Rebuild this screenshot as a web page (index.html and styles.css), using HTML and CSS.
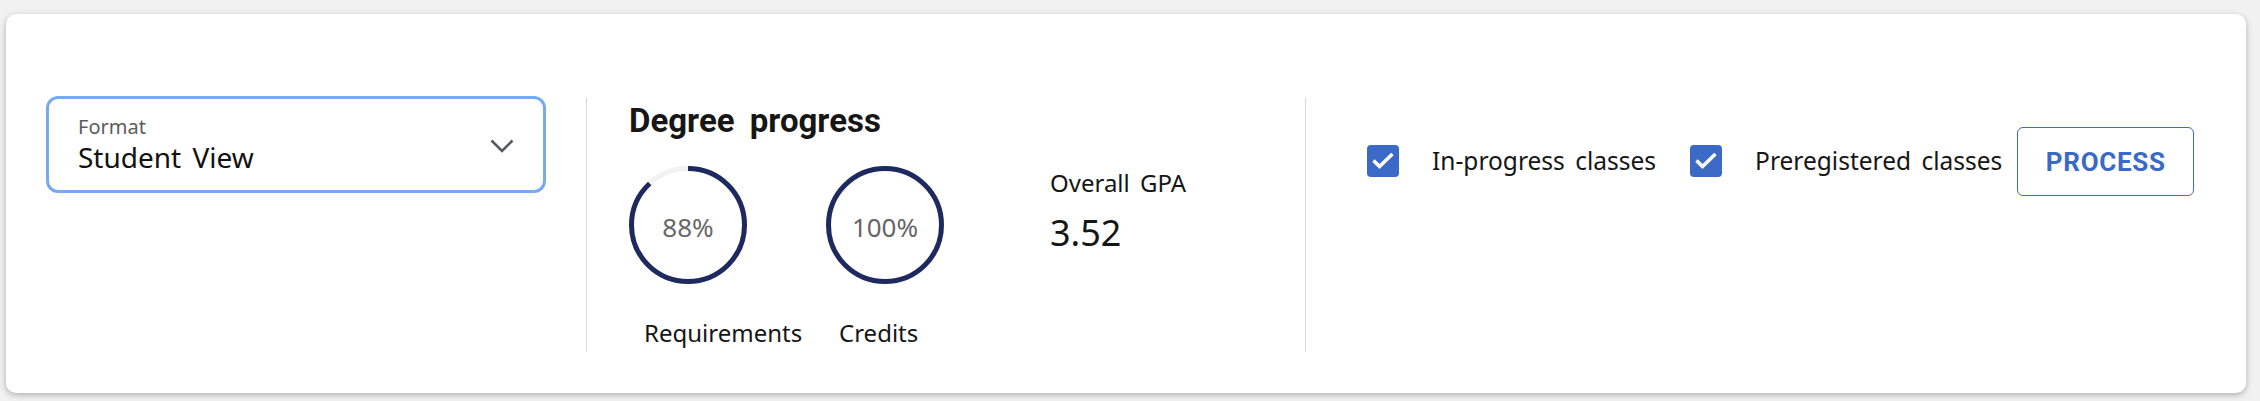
FILE: index.html
```html
<!DOCTYPE html>
<html lang="en">
<head>
  <meta charset="UTF-8">
  <meta name="viewport" content="width=device-width, initial-scale=1.0">
  <title>Degree Audit</title>
  <link rel="stylesheet" href="styles.css">
</head>
<body>
  <div class="card">

    <!-- Format select -->
    <div class="col col-format">
      <div class="select">
        <div class="select-text">
          <span class="select-label">Format</span>
          <span class="select-value">Student View</span>
        </div>
        <svg class="chevron" width="24" height="14" viewBox="0 0 24 14">
          <path d="M1.5 1.5 L12 12 L22.5 1.5" fill="none" stroke="#555a61" stroke-width="2.6"/>
        </svg>
      </div>
    </div>

    <!-- Degree progress -->
    <div class="col col-progress">
      <h2 class="heading">Degree progress</h2>
      <div class="progress-row">
        <div class="metrics">
          <div class="ring">
            <svg width="118" height="118" viewBox="0 0 118 118">
              <circle cx="59" cy="59" r="56.5" fill="none" stroke="#f2f2f2" stroke-width="5"/>
              <circle cx="59" cy="59" r="56.5" fill="none" stroke="#1e2a5f" stroke-width="5"
                      stroke-dasharray="312.4 355" transform="rotate(-90 59 59)"/>
            </svg>
            <span class="ring-value">88%</span>
          </div>
          <div class="ring">
            <svg width="118" height="118" viewBox="0 0 118 118">
              <circle cx="59" cy="59" r="56.5" fill="none" stroke="#1e2a5f" stroke-width="5"/>
            </svg>
            <span class="ring-value">100%</span>
          </div>
          <div class="metric-label first">Requirements</div>
          <div class="metric-label second">Credits</div>
        </div>
        <div class="gpa">
          <div class="gpa-label">Overall GPA</div>
          <div class="gpa-value">3.52</div>
        </div>
      </div>
    </div>

    <!-- Options -->
    <div class="col col-options">
      <div class="options">
        <label class="check">
          <span class="box">
            <svg width="32" height="32" viewBox="0 0 32 32">
              <path d="M6.5 15.5 L12.5 21.5 L25.5 9" fill="none" stroke="#fff" stroke-width="3.6"/>
            </svg>
          </span>
          <span class="check-text">In-progress classes</span>
        </label>
        <label class="check">
          <span class="box">
            <svg width="32" height="32" viewBox="0 0 32 32">
              <path d="M6.5 15.5 L12.5 21.5 L25.5 9" fill="none" stroke="#fff" stroke-width="3.6"/>
            </svg>
          </span>
          <span class="check-text">Preregistered classes</span>
        </label>
        <button class="process">PROCESS</button>
      </div>
    </div>

  </div>
</body>
</html>
```

FILE: styles.css
```css
/* Page */
body {
  margin: 0;
  padding: 14px 14px 8px 6px;
  background: #f1f1f1;
  font-family: 'Noto Sans', sans-serif;
  color: #161616;
  word-spacing: 4px;
}

.card {
  display: flex;
  height: 379px;
  box-sizing: border-box;
  padding: 84px 0 41px 0;
  background: #fff;
  border-radius: 10px;
  box-shadow: 0 2px 6px rgba(0, 0, 0, 0.28);
}

.col {
  height: 254px;
  box-sizing: border-box;
}

/* Format select */
.col-format {
  padding-left: 40px;
  margin-right: 40px;
}

.select {
  display: flex;
  align-items: center;
  justify-content: space-between;
  width: 500px;
  height: 97px;
  margin-top: -2px;
  box-sizing: border-box;
  padding: 0 29px;
  border: 3px solid #78aaf4;
  border-radius: 12px;
}

.select-text {
  display: flex;
  flex-direction: column;
  margin-top: 0;
}

.select-label {
  font-size: 20px;
  line-height: 25px;
  color: #5c5c5c;
}

.select-value {
  font-size: 28px;
  line-height: 36px;
  color: #111;
}

.chevron {
  margin-top: 2px;
}

/* Degree progress */
.col-progress {
  width: 719px;
  padding: 4px 0 0 42px;
  border-left: 1px solid #d9d9d9;
}

.heading {
  margin: 0;
  font-family: Roboto, sans-serif;
  font-weight: 700;
  font-size: 33px;
  line-height: 38px;
  word-spacing: 7px;
  color: #161616;
}

.progress-row {
  display: flex;
  margin-top: 26px;
}

.metrics {
  display: grid;
  grid-template-columns: 197px 118px;
  row-gap: 33px;
}

.ring {
  display: grid;
  place-items: center;
  width: 118px;
  height: 118px;
}

.ring svg,
.ring-value {
  grid-area: 1 / 1;
}

.ring-value {
  font-size: 26px;
  color: #666;
  margin-top: 3px;
}

.metric-label {
  font-size: 24px;
  line-height: 32px;
  white-space: nowrap;
}

.metric-label.first {
  padding-left: 15px;
}

.metric-label.second {
  padding-left: 13px;
}

.gpa {
  margin-left: 106px;
  margin-top: 1px;
}

.gpa-label {
  font-size: 24px;
  line-height: 32px;
}

.gpa-value {
  margin-top: 12px;
  font-size: 36px;
  line-height: 44px;
}

/* Options */
.col-options {
  padding: 29px 0 0 61px;
  border-left: 1px solid #d9d9d9;
}

.options {
  display: flex;
  align-items: center;
  height: 69px;
}

.check {
  display: flex;
  align-items: center;
  margin: -2px 34px 0 0;
}

.check:last-of-type {
  margin-right: 15px;
}

.box {
  display: flex;
  width: 32px;
  height: 32px;
  background: #3b69c6;
  border-radius: 4px;
  margin-right: 33px;
}

.check-text {
  font-size: 24.5px;
  line-height: 32px;
  white-space: nowrap;
}

.process {
  width: 177px;
  height: 69px;
  padding: 0;
  background: #fff;
  border: 1.5px solid #3d6bc7;
  border-radius: 6px;
  font-family: Roboto, sans-serif;
  font-weight: 700;
  font-size: 26px;
  letter-spacing: 0.7px;
  word-spacing: 0;
  color: #3b69c6;
  cursor: pointer;
}
```
